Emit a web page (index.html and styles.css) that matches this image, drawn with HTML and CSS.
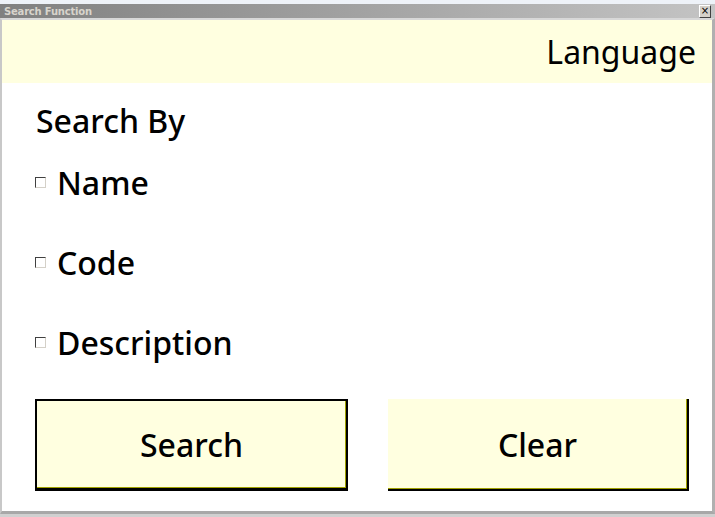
FILE: index.html
```html
<!DOCTYPE html>
<html>
<head>
<meta charset="utf-8">
<link rel="stylesheet" href="styles.css">
</head>
<body>
<div class="desk"></div>
<div class="window">
  <div class="titlebar">
    <span class="title">Search Function</span>
    <span class="close">×</span>
  </div>
  <div class="body">
    <div class="header"><span class="lang">Language</span></div>
    <div class="content">
      <div class="searchby">Search By</div>
      <div class="opt"><span class="cb"></span><span class="lbl">Name</span></div>
      <div class="opt"><span class="cb"></span><span class="lbl">Code</span></div>
      <div class="opt"><span class="cb"></span><span class="lbl">Description</span></div>
      <div class="buttons">
        <div class="btn btn-search">Search</div>
        <div class="btn btn-clear">Clear</div>
      </div>
    </div>
  </div>
</div>
<div class="footer"></div>
</body>
</html>
```

FILE: styles.css
```css
html, body {
  margin: 0;
  padding: 0;
  background: #ffffff;
  width: 715px;
  height: 517px;
  overflow: hidden;
  font-family: "Noto Sans", "Open Sans", sans-serif;
}
.desk {
  height: 4px;
  background: #eef2f8;
}
.window {
  width: 715px;
  box-sizing: border-box;
}
.titlebar {
  height: 14px;
  background: linear-gradient(to right, #808080, #c4c4c4);
  display: flex;
  align-items: center;
  justify-content: space-between;
  padding: 0 4px 0 4px;
  box-sizing: border-box;
}
.title {
  font-family: "DejaVu Sans", sans-serif;
  font-weight: bold;
  font-size: 10px;
  color: #d8d4cc;
  letter-spacing: -0.2px;
}
.close {
  width: 10px;
  height: 11px;
  background: #d4d0c8;
  border: 1px solid;
  border-color: #ffffff #404040 #404040 #ffffff;
  font-family: "DejaVu Sans", sans-serif;
  font-size: 10px;
  line-height: 10px;
  text-align: center;
  color: #000;
}
.body {
  border-left: 2px solid #c8c8c8;
  border-right: 3px solid #b0b0b0;
  border-bottom: 3px solid #a8a8a8;
  border-top: 2px solid #d8d8d8;
  height: 496px;
  box-sizing: border-box;
}
.header {
  height: 63px;
  background: #ffffe0;
  display: flex;
  align-items: center;
  justify-content: flex-end;
  padding-right: 16px;
}
.lang {
  font-size: 32px;
  color: #000;
  font-weight: 400;
}
.content {
  padding: 17px 0 0 33px;
}
.searchby {
  font-size: 32px;
  height: 42px;
  line-height: 42px;
  color: #000;
  font-weight: 500;
  margin-left: 1px;
}
.opt {
  display: flex;
  align-items: center;
  height: 80px;
}
.cb {
  width: 9px;
  height: 9px;
  border: 1px solid;
  border-color: #404040 #d4d0c8 #d4d0c8 #404040;
  background: #fff;
  margin-right: 11px;
  flex: none;
}
.lbl {
  font-size: 32px;
  font-weight: 500;
  color: #000;
}
.buttons {
  display: flex;
  gap: 40px;
  margin-top: 17px;
}
.btn {
  height: 92px;
  background: #ffffe0;
  display: flex;
  align-items: center;
  justify-content: center;
  font-size: 32px;
  font-weight: 500;
  color: #000;
  box-sizing: border-box;
}
.btn-search {
  width: 313px;
  border: 2px solid #000;
  border-width: 2px 2px 3px 2px;
  box-shadow: inset -1px -1px 0 #a0a000;
}
.btn-clear {
  width: 301px;
  border-right: 2px solid #000;
  border-bottom: 2px solid #000;
  box-shadow: inset -1px -1px 0 #a0a000;
}
.footer {
  height: 3px;
  background: #d0d0d0;
}
```
